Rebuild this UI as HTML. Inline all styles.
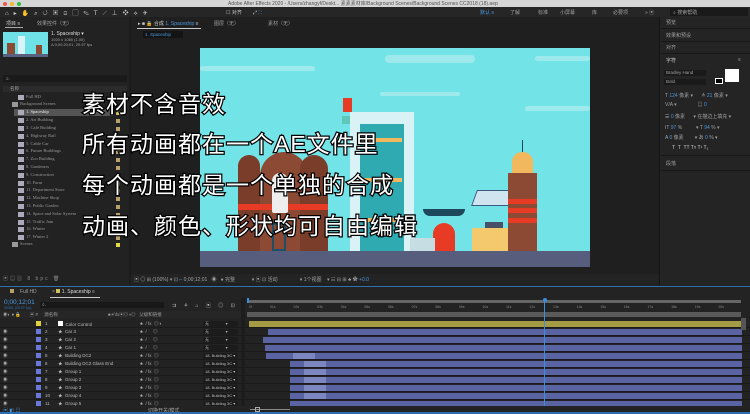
<!DOCTYPE html>
<html><head><meta charset="utf-8"><style>
*{margin:0;padding:0;box-sizing:border-box}
body{width:750px;height:414px;overflow:hidden;background:#1c1c1c;font-family:"Liberation Sans","Noto Sans CJK SC",sans-serif;position:relative;color:#9a9a9a;font-size:5px}
.a{position:absolute}
.t{position:absolute;white-space:nowrap;font-size:5px;color:#a0a0a0}
.sub{position:absolute;left:82px;font-size:23px;color:#fff;-webkit-text-stroke:2.5px #000;paint-order:stroke fill;white-space:nowrap;letter-spacing:1px}
.pr{position:absolute;left:8px;width:115px;height:7px}
.pr i{position:absolute;left:10px;top:1px;width:6px;height:5px;background:#aab}
.pr span{position:absolute;left:18px;top:0;font-size:4.5px;color:#999;font-family:"Liberation Serif",serif}
.sq{position:absolute;left:116px;width:4px;height:4px;background:#b9a16d}
.r{position:absolute;left:0;width:750px;height:8px;border-bottom:1px solid #1a1a1a}
.r .lab{position:absolute;left:36px;top:1px;width:5px;height:5px;background:#6a78d8}
.r .n{position:absolute;left:45px;top:1px;font-size:4.5px;color:#bbb}
.r .nm{position:absolute;left:58px;top:1px;font-size:4.5px;color:#bbb;white-space:nowrap}
.r .sw{position:absolute;left:140px;top:1px;font-size:4.5px;color:#aaa;white-space:nowrap}
.r .pa{position:absolute;left:203px;top:1px;width:35px;height:6px;background:#1c1c1c;font-size:4px;color:#bbb;padding-left:2px;white-space:nowrap;overflow:hidden}
.r .eye{position:absolute;left:3px;top:1px;font-size:4.5px;color:#aaa}
.r .bar{position:absolute;top:1px;height:6px;background:#5a64a2;right:8px}
.r .bl{position:absolute;top:1px;width:22px;height:6px;background:#7c86c0;font-size:3.5px;color:#fff}
.hd{position:absolute;left:661px;width:89px;height:1px;background:#181818}
</style></head><body>
<div class="a" style="left:0;top:0;width:750px;height:7px;background:#d6d6d6"></div>
<div class="a" style="left:3px;top:1.5px;width:4px;height:4px;border-radius:50%;background:#f0574e"></div>
<div class="a" style="left:10px;top:1.5px;width:4px;height:4px;border-radius:50%;background:#f5b82c"></div>
<div class="a" style="left:17px;top:1.5px;width:4px;height:4px;border-radius:50%;background:#2cc240"></div>
<div class="t" style="left:228px;top:0;color:#555;font-size:5px">Adobe After Effects 2020 - /Users/zhangyf/Deskt... 素素素材库/Background Scenes/Background Scenes CC2018 (18).aep</div>
<div class="a" style="left:0;top:7px;width:750px;height:10px;background:#262626"></div>
<div class="t" style="left:5px;top:8px;color:#ccc;font-size:6px;letter-spacing:5px">⌂▸✋⌕↺▣⊡▢✎T⟋⊥❖⟡✈</div>
<div class="t" style="left:226px;top:9px;color:#ccc">☐ 对齐 &nbsp;&nbsp;&nbsp;&nbsp;&nbsp;&nbsp; ⤢ <span style="color:#4a9ae0">⛶</span></div>
<div class="t" style="left:480px;top:9px;color:#4a9ae0">默认 ≡</div>
<div class="t" style="left:510px;top:9px">了解</div><div class="t" style="left:538px;top:9px">标准</div><div class="t" style="left:560px;top:9px">小屏幕</div><div class="t" style="left:592px;top:9px">库</div><div class="t" style="left:613px;top:9px">必要项</div>
<div class="t" style="left:645px;top:9px">» ▣</div>
<div class="a" style="left:670px;top:8px;width:78px;height:8px;background:#1a1a1a"></div>
<div class="t" style="left:673px;top:9px">⌕ 搜索帮助</div>
<!-- left project panel -->
<div class="a" style="left:0;top:17px;width:129px;height:268px;background:#222"></div>
<div class="t" style="left:6px;top:20px;color:#ccc">项目 ≡</div>
<div class="a" style="left:5px;top:27px;width:18px;height:1px;background:#aaa"></div>
<div class="t" style="left:37px;top:20px">效果控件（无）</div>
<div class="a" style="left:3px;top:32px;width:45px;height:25px;background:#6ee2e6"></div>
<div class="a" style="left:7px;top:43px;width:8px;height:13px;background:#8a4a33"></div>
<div class="a" style="left:18px;top:36px;width:7px;height:20px;background:#d8f4f8"></div>
<div class="a" style="left:36px;top:45px;width:6px;height:10px;background:#8a4a33"></div>
<div class="a" style="left:3px;top:54px;width:45px;height:3px;background:#5a6080"></div>
<div class="t" style="left:51px;top:31px;color:#ddd">1. Spaceship ▾</div>
<div class="t" style="left:51px;top:37px;font-size:4px">1920 x 1080 (1.00)</div>
<div class="t" style="left:51px;top:42px;font-size:4px">Δ 0;00;20;01, 29.97 fps</div>
<div class="a" style="left:3px;top:75px;width:124px;height:7px;background:#1a1a1a"></div>
<div class="t" style="left:6px;top:76px">⌕.</div>
<div class="a" style="left:3px;top:86px;width:124px;height:6px;background:#2b2b2b"></div>
<div class="t" style="left:10px;top:86px;font-size:4.5px">名称</div>
<div class="pr" style="top:94px"><i></i><span>Full HD</span></div>
<div class="pr" style="top:101px;left:2px"><i style="background:#999"></i><span>Background Scenes</span></div>
<div class="a" style="left:14px;top:109px;width:100px;height:7px;background:#555"></div>
<div class="pr" style="top:109px"><i></i><span style="color:#eee">1. Spaceship</span></div>
<div class="pr" style="top:117px"><i></i><span>2. Art Building</span></div>
<div class="pr" style="top:125px"><i></i><span>3. Café Building</span></div>
<div class="pr" style="top:133px"><i></i><span>4. Highway Rail</span></div>
<div class="pr" style="top:141px"><i></i><span>5. Cable Car</span></div>
<div class="pr" style="top:148px"><i></i><span>6. Future Buildings</span></div>
<div class="pr" style="top:156px"><i></i><span>7. Zoo Building</span></div>
<div class="pr" style="top:164px"><i></i><span>8. Gardeners</span></div>
<div class="pr" style="top:172px"><i></i><span>9. Construction</span></div>
<div class="pr" style="top:180px"><i></i><span>10. Farm</span></div>
<div class="pr" style="top:187px"><i></i><span>11. Department Store</span></div>
<div class="pr" style="top:195px"><i></i><span>12. Machine Shop</span></div>
<div class="pr" style="top:203px"><i></i><span>13. Public Garden</span></div>
<div class="pr" style="top:211px"><i></i><span>14. Space and Solar System</span></div>
<div class="pr" style="top:219px"><i></i><span>15. Traffic Jam</span></div>
<div class="pr" style="top:226px"><i></i><span>16. Winter</span></div>
<div class="pr" style="top:234px"><i></i><span>17. Winter 2</span></div>
<div class="pr" style="top:241px;left:2px"><i style="background:#999"></i><span>Scenes</span></div>
<div class="sq" style="top:111px;background:#cfc35a"></div><div class="sq" style="top:119px"></div><div class="sq" style="top:127px"></div><div class="sq" style="top:135px"></div><div class="sq" style="top:143px"></div><div class="sq" style="top:150px"></div><div class="sq" style="top:158px"></div><div class="sq" style="top:166px"></div><div class="sq" style="top:174px"></div><div class="sq" style="top:182px"></div><div class="sq" style="top:189px"></div><div class="sq" style="top:197px"></div><div class="sq" style="top:205px"></div><div class="sq" style="top:213px"></div><div class="sq" style="top:221px"></div><div class="sq" style="top:228px"></div><div class="sq" style="top:236px"></div><div class="sq" style="top:243px;background:#e3d84a"></div>
<div class="t" style="left:3px;top:275px;color:#888;letter-spacing:2px">▣▤▥ 8 bpc 🗑</div>
<!-- viewer -->
<div class="a" style="left:131px;top:17px;width:528px;height:268px;background:#1f1f1f"></div>
<div class="t" style="left:138px;top:20px;color:#ccc">▸ ■ 🔒 合成 <span style="color:#4a9ae0">1. Spaceship</span> ≡</div>
<div class="a" style="left:137px;top:28px;width:64px;height:1px;background:#ccc"></div>
<div class="t" style="left:214px;top:20px">图层（无）</div><div class="t" style="left:268px;top:20px">素材（无）</div>
<div class="a" style="left:143px;top:31px;width:40px;height:7px;background:#141414"></div>
<div class="t" style="left:145px;top:32px;color:#4a9ae0;font-size:4.5px">1. Spaceship</div>
<div class="a" style="left:200px;top:48px;width:390px;height:219px;background:#72e4e8;overflow:hidden">
 <div class="a" style="left:185px;top:7px;width:90px;height:8px;border-radius:6px;background:#9ee9ec"></div>
 <div class="a" style="left:0;top:18px;width:115px;height:5px;border-radius:4px;background:#9ee9ec"></div>
 <div class="a" style="left:335px;top:8px;width:55px;height:5px;border-radius:4px;background:#9ee9ec"></div>
 <div class="a" style="left:180px;top:44px;width:80px;height:4px;border-radius:3px;background:#9ee9ec"></div>
 <div class="a" style="left:325px;top:58px;width:65px;height:5px;border-radius:4px;background:#9ee9ec"></div>
 <div class="a" style="left:38px;top:107px;width:22px;height:96px;background:#7a3d2a;border-radius:11px 11px 0 0"></div>
 <div class="a" style="left:60px;top:104px;width:48px;height:99px;background:#8c4a34;border-radius:24px 24px 0 0"></div>
 <div class="a" style="left:100px;top:107px;width:28px;height:96px;background:#7a3d2a;border-radius:14px 14px 0 0"></div>
 <div class="a" style="left:38px;top:156px;width:90px;height:6px;background:#e83b25"></div>
 <div class="a" style="left:72px;top:125px;width:16px;height:40px;background:#eee;border-radius:8px 8px 2px 2px"></div>
 <div class="a" style="left:72px;top:175px;width:14px;height:28px;border:2px solid #1e4f66"></div>
 <div class="a" style="left:142px;top:68px;width:70px;height:8px;background:#5ec8b8"></div>
 <div class="a" style="left:150px;top:64px;width:64px;height:139px;background:#d8f2f6"></div>
 <div class="a" style="left:160px;top:76px;width:44px;height:127px;background:#2eaab0"></div>
 <div class="a" style="left:162px;top:90px;width:40px;height:4px;background:#f2b85e"></div>
 <div class="a" style="left:162px;top:130px;width:40px;height:4px;background:#f2b85e"></div>
 <div class="a" style="left:162px;top:170px;width:40px;height:4px;background:#f2b85e"></div>
 <div class="a" style="left:143px;top:50px;width:9px;height:14px;background:#e83b25"></div>
 <div class="a" style="left:223px;top:161px;width:42px;height:7px;border-radius:0 0 21px 21px;background:#1c4a5c"></div>
 <div class="a" style="left:233px;top:175px;width:22px;height:28px;border-radius:11px 11px 0 0;background:#e83b25"></div>
 <div class="a" style="left:210px;top:190px;width:25px;height:13px;background:#c7dde4"></div>
 <div class="a" style="left:274px;top:142px;width:38px;height:16px;background:#d0e4f0;border:1px solid #3a5a80;transform:skewX(-20deg)"></div>
 <div class="a" style="left:272px;top:180px;width:36px;height:23px;background:#f4c96e"></div>
 <div class="a" style="left:285px;top:174px;width:18px;height:6px;background:#4a5068"></div>
 <div class="a" style="left:308px;top:125px;width:29px;height:78px;background:#8c4a34"></div>
 <div class="a" style="left:308px;top:151px;width:29px;height:5px;background:#e83b25"></div>
 <div class="a" style="left:308px;top:160px;width:29px;height:5px;background:#e83b25"></div>
 <div class="a" style="left:308px;top:170px;width:29px;height:5px;background:#e83b25"></div>
 <div class="a" style="left:312px;top:104px;width:21px;height:21px;border-radius:10px 10px 0 0;background:#f2b85e"></div>
 <div class="a" style="left:322px;top:92px;width:1px;height:12px;background:#1c4a5c"></div>
 <div class="a" style="left:0;top:203px;width:390px;height:16px;background:#575d7c"></div>
</div>
<div class="sub" style="top:85px">素材不含音效</div>
<div class="sub" style="top:125px">所有动画都在一个AE文件里</div>
<div class="sub" style="top:166px">每个动画都是一个单独的合成</div>
<div class="sub" style="top:207px">动画、颜色、形状均可自由编辑</div>
<div class="a" style="left:131px;top:274px;width:528px;height:10px;background:#232323"></div>
<div class="t" style="left:134px;top:276px">▣ ◎ ⊞ (100%) ▾ ⊡ <span style="color:#4a9ae0">⌐</span> 0;00;12;01 &nbsp; ◉ &nbsp; ● 完整 &nbsp;&nbsp;&nbsp;&nbsp;&nbsp;&nbsp;&nbsp;&nbsp;&nbsp;&nbsp; ▾ ▣ ⊡ 活动 &nbsp;&nbsp;&nbsp;&nbsp;&nbsp;&nbsp;&nbsp;&nbsp;&nbsp;&nbsp;&nbsp;&nbsp;&nbsp;&nbsp; ▾ 1个视图 &nbsp;&nbsp; ▾ ☷ ⊟ ⊞ ♣ ✿ <span style="color:#4a9ae0">+0.0</span></div>
<!-- right panel -->
<div class="a" style="left:660px;top:17px;width:90px;height:268px;background:#242424"></div>
<div class="a" style="left:659px;top:17px;width:1px;height:268px;background:#151515"></div>
<div class="t" style="left:666px;top:19px">预览</div><div class="hd" style="top:28px"></div>
<div class="t" style="left:666px;top:32px">效果和预设</div><div class="hd" style="top:41px"></div>
<div class="t" style="left:666px;top:44px">对齐</div><div class="hd" style="top:53px"></div>
<div class="t" style="left:666px;top:57px;color:#ccc">字符</div><div class="t" style="left:738px;top:57px">≡</div>
<div class="a" style="left:664px;top:70px;width:42px;height:6px;background:#1a1a1a"></div>
<div class="t" style="left:666px;top:70px;font-size:4.5px">Bradley Hand</div>
<div class="a" style="left:664px;top:79px;width:42px;height:6px;background:#1a1a1a"></div>
<div class="t" style="left:666px;top:79px;font-size:4.5px">Bold</div>
<div class="a" style="left:725px;top:69px;width:14px;height:13px;background:#fff"></div>
<div class="a" style="left:715px;top:78px;width:8px;height:6px;background:#000;border:1px solid #fff"></div>
<div class="t" style="left:665px;top:92px">T <span style="color:#4a9ae0">124</span> 像素 ▾ &nbsp;&nbsp;&nbsp;&nbsp; ≜ <span style="color:#4a9ae0">21</span> 像素 ▾</div>
<div class="t" style="left:665px;top:101px">V/A ▾ &nbsp;&nbsp;&nbsp;&nbsp;&nbsp;&nbsp;&nbsp;&nbsp;&nbsp;&nbsp;&nbsp;&nbsp;&nbsp; ▤ <span style="color:#4a9ae0">0</span></div>
<div class="t" style="left:665px;top:113px">☰ <span style="color:#4a9ae0">0</span> 像素 &nbsp;&nbsp;&nbsp;&nbsp; ▾ 在描边上填充 ▾</div>
<div class="t" style="left:665px;top:125px">IT <span style="color:#4a9ae0">97</span> % &nbsp;&nbsp;&nbsp;&nbsp;&nbsp;&nbsp;&nbsp;&nbsp; ▾ T <span style="color:#4a9ae0">94</span> % ▾</div>
<div class="t" style="left:665px;top:134px">A <span style="color:#4a9ae0">0</span> 像素 &nbsp;&nbsp;&nbsp;&nbsp;&nbsp;&nbsp; ▾ あ <span style="color:#4a9ae0">0</span> % ▾</div>
<div class="t" style="left:672px;top:145px;color:#ccc">T &nbsp;T &nbsp;TT Tт T¹ T₁</div>
<div class="hd" style="top:155px"></div>
<div class="t" style="left:666px;top:160px">段落</div><div class="hd" style="top:170px"></div>
<!-- timeline -->
<div class="a" style="left:0;top:285px;width:750px;height:129px;background:#232323"></div>
<div class="a" style="left:0;top:286px;width:750px;height:1px;background:#2d6fb0"></div>
<div class="a" style="left:10px;top:289px;width:4px;height:4px;background:#b9a16d"></div>
<div class="t" style="left:20px;top:289px">Full HD</div>
<div class="t" style="left:52px;top:289px">× <span style="display:inline-block;width:4px;height:4px;background:#cfc35a"></span> <span style="color:#ddd">1. Spaceship</span> ≡</div>
<div class="a" style="left:50px;top:297px;width:50px;height:1px;background:#ccc"></div>
<div class="t" style="left:4px;top:299px;color:#4a9ae0;font-size:6.5px">0;00;12;01</div>
<div class="t" style="left:4px;top:306px;color:#2d6fb0;font-size:3.5px">00361 (29.97 fps)</div>
<div class="a" style="left:40px;top:302px;width:124px;height:6px;background:#181818"></div>
<div class="t" style="left:42px;top:302px">⌕.</div>
<div class="t" style="left:172px;top:302px;color:#bbb;letter-spacing:3px">⇉ ⚘ ⌂ ▣ ◎ ⊡</div>
<div class="a" style="left:0;top:311px;width:245px;height:7px;background:#262626"></div>
<div class="t" style="left:3px;top:312px;font-size:4.5px">◉◐ ● 🔒 &nbsp;&nbsp;&nbsp;&nbsp;&nbsp; ▣ # &nbsp;&nbsp;&nbsp; 源名称 &nbsp;&nbsp;&nbsp;&nbsp;&nbsp;&nbsp;&nbsp;&nbsp;&nbsp;&nbsp;&nbsp;&nbsp;&nbsp;&nbsp;&nbsp;&nbsp;&nbsp;&nbsp;&nbsp;&nbsp;&nbsp;&nbsp;&nbsp;&nbsp;&nbsp;&nbsp;&nbsp;&nbsp;&nbsp;&nbsp;&nbsp;&nbsp;&nbsp;&nbsp;&nbsp;&nbsp;&nbsp;&nbsp; ♣✳\fx▣◎◑◎ &nbsp; 父级和链接</div>
<div class="a" style="left:247px;top:300px;width:494px;height:3px;background:#666"></div>
<div class="a" style="left:247px;top:298px;width:2px;height:5px;background:#3a8ee0"></div>
<div class="t" style="left:249px;top:305px;font-size:3.5px;color:#888;word-spacing:17px">0f 01s 02s 03s 04s 05s 06s 07s 08s 09s 10s 11s 12s 13s 14s 15s 16s 17s 18s 19s 20s</div>
<div class="a" style="left:247px;top:312px;width:494px;height:5px;background:#5a5a5a"></div>
<div class="a" style="left:241px;top:298px;width:4px;height:113px;background:#1d1d1d"></div>
<div class="r" style="top:320px"><span class="eye">&nbsp;</span><i class="lab" style="background:#e0d040"></i><span class="n">1</span><span class="nm"><span style="display:inline-block;width:5px;height:5px;background:#fff"></span> &nbsp;Color Control</span><span class="sw">♣ &nbsp;/ fx &nbsp;◎◑</span><span class="pa">无 &nbsp;&nbsp;&nbsp;&nbsp;&nbsp;&nbsp;&nbsp;&nbsp;&nbsp;&nbsp;&nbsp;&nbsp;&nbsp; ▾</span><i class="bar" style="left:249px;background:#a69b45"></i></div>
<div class="r" style="top:328px"><span class="eye">◉</span><i class="lab"></i><span class="n">2</span><span class="nm">★ &nbsp;Car 3</span><span class="sw">♣ &nbsp;/ &nbsp;&nbsp;&nbsp; ◎</span><span class="pa">无 &nbsp;&nbsp;&nbsp;&nbsp;&nbsp;&nbsp;&nbsp;&nbsp;&nbsp;&nbsp;&nbsp;&nbsp;&nbsp; ▾</span><i class="bar" style="left:268px"></i></div>
<div class="r" style="top:336px"><span class="eye">◉</span><i class="lab"></i><span class="n">3</span><span class="nm">★ &nbsp;Car 2</span><span class="sw">♣ &nbsp;/ &nbsp;&nbsp;&nbsp; ◎</span><span class="pa">无 &nbsp;&nbsp;&nbsp;&nbsp;&nbsp;&nbsp;&nbsp;&nbsp;&nbsp;&nbsp;&nbsp;&nbsp;&nbsp; ▾</span><i class="bar" style="left:263px"></i></div>
<div class="r" style="top:344px"><span class="eye">◉</span><i class="lab"></i><span class="n">4</span><span class="nm">★ &nbsp;Car 1</span><span class="sw">♣ &nbsp;/ &nbsp;&nbsp;&nbsp; ◎</span><span class="pa">无 &nbsp;&nbsp;&nbsp;&nbsp;&nbsp;&nbsp;&nbsp;&nbsp;&nbsp;&nbsp;&nbsp;&nbsp;&nbsp; ▾</span><i class="bar" style="left:265px"></i></div>
<div class="r" style="top:352px"><span class="eye">◉</span><i class="lab"></i><span class="n">5</span><span class="nm">★ &nbsp;Building DC2</span><span class="sw">♣ &nbsp;/ fx &nbsp;◎</span><span class="pa">18. Building 3C ▾</span><i class="bar" style="left:266px"></i><i class="bl" style="left:293px"></i></div>
<div class="r" style="top:360px"><span class="eye">◉</span><i class="lab"></i><span class="n">6</span><span class="nm">★ &nbsp;Building DC2 Glass End</span><span class="sw">♣ &nbsp;/ fx &nbsp;◎</span><span class="pa">18. Building 3C ▾</span><i class="bar" style="left:290px"></i><i class="bl" style="left:304px"></i></div>
<div class="r" style="top:368px"><span class="eye">◉</span><i class="lab"></i><span class="n">7</span><span class="nm">★ &nbsp;Group 1</span><span class="sw">♣ &nbsp;/ fx &nbsp;◎</span><span class="pa">18. Building 3C ▾</span><i class="bar" style="left:290px"></i><i class="bl" style="left:304px"></i></div>
<div class="r" style="top:376px"><span class="eye">◉</span><i class="lab"></i><span class="n">8</span><span class="nm">★ &nbsp;Group 2</span><span class="sw">♣ &nbsp;/ fx &nbsp;◎</span><span class="pa">18. Building 3C ▾</span><i class="bar" style="left:290px"></i><i class="bl" style="left:304px"></i></div>
<div class="r" style="top:384px"><span class="eye">◉</span><i class="lab"></i><span class="n">9</span><span class="nm">★ &nbsp;Group 3</span><span class="sw">♣ &nbsp;/ fx &nbsp;◎</span><span class="pa">18. Building 3C ▾</span><i class="bar" style="left:290px"></i><i class="bl" style="left:304px"></i></div>
<div class="r" style="top:392px"><span class="eye">◉</span><i class="lab"></i><span class="n">10</span><span class="nm">★ &nbsp;Group 4</span><span class="sw">♣ &nbsp;/ fx &nbsp;◎</span><span class="pa">18. Building 3C ▾</span><i class="bar" style="left:290px"></i><i class="bl" style="left:304px"></i></div>
<div class="r" style="top:400px"><span class="eye">◉</span><i class="lab"></i><span class="n">11</span><span class="nm">★ &nbsp;Group 5</span><span class="sw">♣ &nbsp;/ fx &nbsp;◎</span><span class="pa">18. Building 3C ▾</span><i class="bar" style="left:290px"></i></div>
<div class="a" style="left:0;top:406px;width:750px;height:8px;background:#232323"></div>
<div class="t" style="left:3px;top:407px;color:#4a9ae0">▣ ◧ ▤</div>
<div class="t" style="left:148px;top:407px">切换开关/模式</div>
<div class="a" style="left:250px;top:409px;width:40px;height:1px;background:#888"></div>
<div class="a" style="left:255px;top:407px;width:5px;height:5px;border:1px solid #aaa"></div>
<div class="a" style="left:543px;top:298px;width:4px;height:4px;border-radius:50%;background:#3a8ee0"></div>
<div class="a" style="left:544px;top:302px;width:1px;height:104px;background:#3a8ee0"></div>
<div class="a" style="left:741px;top:318px;width:5px;height:12px;background:#555"></div>
<div class="a" style="left:0;top:412px;width:750px;height:2px;background:#2d6fb0"></div>
</body></html>
